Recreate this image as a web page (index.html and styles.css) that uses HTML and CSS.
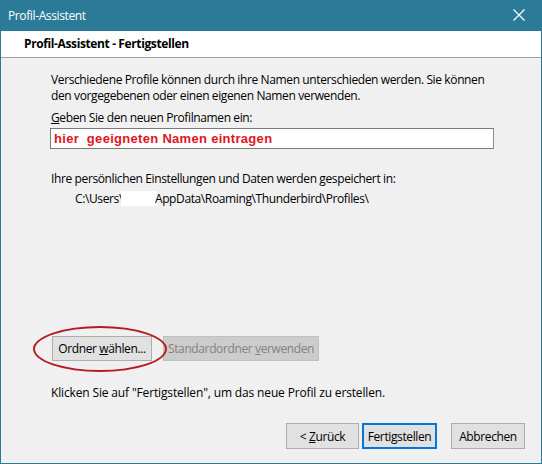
FILE: index.html
```html
<!DOCTYPE html>
<html lang="de">
<head>
<meta charset="utf-8">
<title>Profil-Assistent</title>
<link rel="stylesheet" href="styles.css">
</head>
<body>
<div class="window">
  <div class="titlebar">
    <span class="title">Profil-Assistent</span>
    <svg class="close" width="12" height="12" viewBox="0 0 12 12"><path d="M0.5 0.5 L11.5 11.5 M11.5 0.5 L0.5 11.5" stroke="#fff" stroke-width="1.2" fill="none"/></svg>
  </div>
  <div class="header">Profil-Assistent - Fertigstellen</div>
  <div class="content">
    <p class="intro">Verschiedene Profile können durch ihre Namen unterschieden werden. Sie können<br>den vorgegebenen oder einen eigenen Namen verwenden.</p>
    <p class="label"><u>G</u>eben Sie den neuen Profilnamen ein:</p>
    <div class="input">hier&nbsp; geeigneten Namen eintragen</div>
    <p class="saved">Ihre persönlichen Einstellungen und Daten werden gespeichert in:</p>
    <p class="path">C:\Users\<span class="mask"></span>AppData\Roaming\Thunderbird\Profiles\</p>
    <div class="spacer"></div>
    <div class="folder-row">
      <div class="btn-wrap">
        <button class="btn">Ordner <u>w</u>ählen...</button>
        <div class="ring"></div>
      </div>
      <button class="btn disabled">Standardordner <u>v</u>erwenden</button>
    </div>
    <p class="hint">Klicken Sie auf "Fertigstellen", um das neue Profil zu erstellen.</p>
    <div class="footer">
      <button class="btn nav">&lt; <u>Z</u>urück</button>
      <button class="btn nav default">Fertigstellen</button>
      <button class="btn nav cancel">Abbrechen</button>
    </div>
  </div>
</div>
</body>
</html>
```
FILE: styles.css
```css
* { box-sizing: border-box; }
html, body { margin: 0; padding: 0; }
body {
  width: 542px;
  height: 464px;
  font-family: "Open Sans", "Noto Sans", sans-serif;
  font-size: 12px;
  letter-spacing: -0.38px;
  color: #000;
  overflow: hidden;
}
.window {
  width: 542px;
  height: 464px;
  border: 1px solid #2b7a98;
  border-top: none;
  display: flex;
  flex-direction: column;
  background: #f0f0f0;
}
.titlebar {
  height: 31px;
  background: #2b7b98;
  display: flex;
  align-items: center;
  justify-content: space-between;
  padding: 0 17px 1px 8px;
  margin: 0 -1px;
}
.title {
  color: #fff;
  font-size: 12px;
}
.close { display: block; }
.header {
  height: 27px;
  background: #fff;
  border-bottom: 1px solid #a0a0a0;
  font-weight: bold;
  padding: 4px 0 0 23px;
  font-size: 12px;
}
.content {
  flex: 1;
  display: flex;
  flex-direction: column;
  padding: 14px 16px 14px 50px;
}
p { margin: 0; white-space: nowrap; }
.intro { line-height: 16px; }
.label { margin-top: 6px; line-height: 15px; }
.input {
  margin-top: 3px;
  width: 444px;
  height: 21px;
  margin-left: -1px;
  background: #fff;
  border: 1px solid #7a7a7a;
  border-right-color: #8d8d8d;
  color: #e0141e;
  font-family: "Liberation Sans", Arial, sans-serif;
  font-weight: bold;
  font-size: 13px;
  letter-spacing: 0.3px;
  line-height: 19px;
  padding-left: 3px;
}
.saved { margin-top: 22px; line-height: 15px; }
.path { margin-top: 5px; margin-left: 24px; line-height: 15px; display: flex; align-items: center; }
.mask {
  display: inline-block;
  width: 36px;
  height: 15px;
  background: #fff;
  margin: 0 -2px 0 -2px;
}
.spacer { flex: 1; }
.folder-row {
  display: flex;
  gap: 11px;
  margin-left: 1px;
}
.btn-wrap { position: relative; }
.btn {
  height: 25px;
  font-family: inherit;
  font-size: 12px;
  letter-spacing: -0.38px;
  white-space: nowrap;
  background: #e1e1e1;
  border: 1px solid #adadad;
  color: #000;
  padding: 0 4px;
  margin: 0;
}
.btn.disabled {
  background: #cccccc;
  border-color: #bfbfbf;
  color: #838383;
  width: 156px;
}
.btn-wrap .btn { width: 100px; }
.ring {
  position: absolute;
  left: -19px;
  top: -10px;
  width: 134px;
  height: 46px;
  border: 2px solid #b81a22;
  border-radius: 50%;
  pointer-events: none;
}
.hint { margin-top: 24px; line-height: 15px; letter-spacing: -0.15px; }
.footer {
  display: flex;
  justify-content: flex-end;
  margin-top: 23px;
  gap: 3px;
}
.btn.nav { width: 73px; height: 26px; padding: 0; }
.btn.default {
  width: 75px;
  border: 2px solid #0078d7;
}
.btn.cancel { margin-left: 11px; width: 74px; }
```
